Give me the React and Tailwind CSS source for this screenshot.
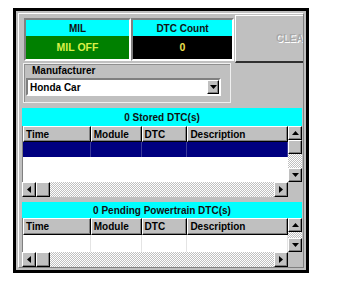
const raised =
  "border border-t-white border-l-white border-r-black border-b-black shadow-[inset_-1px_-1px_0_#808080]";
const sunken =
  "border-2 border-t-[#808080] border-l-[#808080] border-r-white border-b-white";
const dither =
  "bg-[repeating-conic-gradient(#c0c0c0_0_25%,#ffffff_0_50%)] bg-[length:2px_2px]";

const cols = [
  { name: "Time", w: "w-[68px]" },
  { name: "Module", w: "w-[51px]" },
  { name: "DTC", w: "w-[46px]" },
  { name: "Description", w: "w-[101px]" },
];

const Arrow = ({ dir, className = "" }) => (
  <div
    className={`bg-[#c0c0c0] ${raised} flex items-center justify-center shrink-0 ${className}`}>
    {dir === "up" && (
      <svg width="7" height="4">
        <polygon points="3.5,0 7,4 0,4" fill="#000" />
      </svg>
    )}
    {dir === "down" && (
      <svg width="7" height="4">
        <polygon points="0,0 7,0 3.5,4" fill="#000" />
      </svg>
    )}
    {dir === "left" && (
      <svg width="4" height="7">
        <polygon points="4,0 4,7 0,3.5" fill="#000" />
      </svg>
    )}
    {dir === "right" && (
      <svg width="4" height="7">
        <polygon points="0,0 4,3.5 0,7" fill="#000" />
      </svg>
    )}
  </div>
);

const HScroll = () => (
  <div className="flex h-[15px]">
    <Arrow dir="left" className="w-[14px] h-full" />
    <div className={`w-[14px] h-full bg-[#c0c0c0] ${raised}`} />
    <div className={`flex-1 h-full ${dither}`} />
    <Arrow dir="right" className="w-[14px] h-full" />
    <div className="w-[14px] h-full bg-[#c0c0c0]" />
  </div>
);

const DtcList = ({ title, pending }) => (
  <div className="ml-[3px] w-[280px] flex flex-col">
    <div
      className={`${pending ? "h-[16px]" : "h-[18px]"} bg-[#00ffff] flex items-center justify-center text-[10px] font-bold text-[#111]`}>
      {title}
    </div>
    <div className="flex">
      <div className="w-[266px] flex flex-col border-l border-[#808080]">
        <div className={`flex ${pending ? "h-[17px]" : "h-[16px]"}`}>
          {cols.map(c => (
            <div
              key={c.name}
              className={`${c.w} ${raised} bg-[#c0c0c0] pl-[2px] flex items-center text-[10px] font-bold text-black`}>
              {c.name}
            </div>
          ))}
        </div>
        {pending ? (
          <div className="h-[17px] bg-white flex">
            {cols.map(c => (
              <div key={c.name} className={`${c.w} h-full border-r border-[#e4e4e4]`} />
            ))}
          </div>
        ) : (
          <div className="h-[40px] bg-white flex flex-col">
            <div className="h-[15px] bg-[#000080] flex">
              {cols.map(c => (
                <div key={c.name} className={`${c.w} h-full border-r border-[#3a3a9a]`} />
              ))}
            </div>
          </div>
        )}
      </div>
      <div className="w-[14px] flex flex-col">
        <Arrow dir="up" className="w-[14px] h-[14px]" />
        {!pending && <div className={`w-[14px] h-[14px] bg-[#c0c0c0] ${raised}`} />}
        <div className={`flex-1 ${dither}`} />
        <Arrow dir="down" className="w-[14px] h-[14px]" />
      </div>
    </div>
    <HScroll />
  </div>
);

export default function App() {
  return (
    <div className="w-[349px] h-[286px] bg-white overflow-hidden font-['Liberation_Sans',Arial,sans-serif]">
      <div className="ml-[13px] mt-[8px] w-[296px] h-[265px] border-[3px] border-black bg-[#c0c0c0] p-[2px]">
        <div className="h-full border border-t-white border-l-white border-r-[#808080] border-b-[#808080] flex flex-col">
          <div className="flex items-start h-[49px]">
            <div className={`ml-[5px] mt-[4px] w-[107px] h-[43px] ${sunken} flex flex-col`}>
              <div className="h-[16px] bg-[#00ffff] flex items-center justify-center text-[10px] font-bold text-[#111]">
                MIL
              </div>
              <div className="flex-1 bg-[#008000] flex items-center justify-center text-[10.5px] font-bold text-[#d8f048]">
                MIL OFF
              </div>
            </div>
            <div className={`mt-[4px] w-[103px] h-[43px] ${sunken} flex flex-col`}>
              <div className="h-[16px] bg-[#00ffff] flex items-center justify-center text-[10px] font-bold text-[#111]">
                DTC Count
              </div>
              <div className="flex-1 bg-black flex items-center justify-center text-[10.5px] font-bold text-[#f0e050]">
                0
              </div>
            </div>
            <div className="ml-[1px] mt-[1px] flex-1 h-[48px] overflow-hidden border-t border-l border-t-white border-l-white border-b-2 border-b-[#303030] flex items-center pl-[40px]">
              <span className="text-[10px] font-bold whitespace-nowrap text-[#a8a8a8] [text-shadow:1px_1px_0_#ffffff]">
                CLEAR
              </span>
            </div>
          </div>
          <div className="flex">
            <div className="ml-[4px] w-[208px] h-[40px] border border-[#f0f0f0] shadow-[inset_1px_1px_0_#909090] flex flex-col">
              <div className="pl-[8px] pt-[1px] h-[13px] text-[10px] leading-[12px] font-bold text-black">
                Manufacturer
              </div>
              <div className={`ml-[2px] mt-[1px] w-[195px] h-[18px] bg-white ${sunken} flex items-center`}>
                <span className="flex-1 pl-[2px] text-[10px] font-bold text-black">Honda Car</span>
                <Arrow dir="down" className="w-[12px] h-[14px]" />
              </div>
            </div>
          </div>
          <div className="mt-[5px]">
            <DtcList title="0 Stored DTC(s)" />
          </div>
          <div className="mt-[5px]">
            <DtcList title="0 Pending Powertrain DTC(s)" pending />
          </div>
        </div>
      </div>
    </div>
  );
}
